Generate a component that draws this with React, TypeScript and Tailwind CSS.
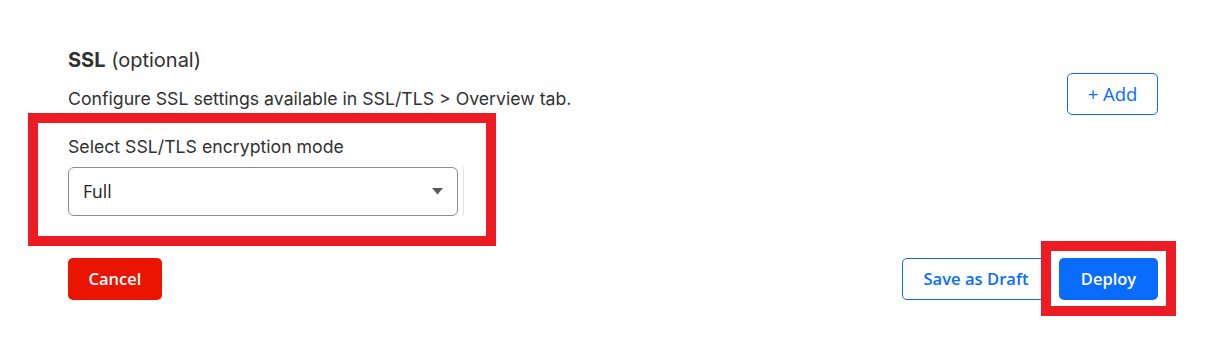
import React from 'react';

const App = () => {
    return (
        <div className="w-[1220px] h-[357px] bg-white text-[#313131] font-['Inter',sans-serif]">
            <div className="pl-[68px] pr-[62px] pt-[47px]">
                <div className="flex items-start justify-between">
                    <div>
                        <h2 className="text-[20px] leading-[26px]">
                            <span className="font-bold">SSL</span> (optional)
                        </h2>
                        <p className="mt-[13px] text-[17.7px] leading-[26px]">
                            Configure SSL settings available in SSL/TLS &gt; Overview tab.
                        </p>

                        {/* encryption mode select, highlighted */}
                        <div className="relative mt-[22px] w-[397px]">
                            <div className="pointer-events-none absolute left-[-40px] top-[-21px] z-10 h-[133px] w-[468px] border-[10px] border-[#ed1c24]" />
                            <label className="block text-[17.7px] leading-[26px]">Select SSL/TLS encryption mode</label>
                            <div className="mt-[7px] flex items-stretch">
                                <div className="flex h-[49px] w-[390px] items-center justify-between rounded-[6px] border border-[#8c8c8c] pl-[14px] pr-[14px]">
                                    <span className="font-['Open_Sans',sans-serif] text-[17.5px] text-[#222]">Full</span>
                                    <svg width="11" height="7" viewBox="0 0 11 7">
                                        <path d="M0 0 L11 0 L5.5 6.5 Z" fill="#595959" />
                                    </svg>
                                </div>
                                <div className="ml-[5px] w-px bg-[#d6e4f5]" />
                            </div>
                        </div>
                    </div>

                    <button className="mt-[26px] h-[42px] w-[91px] rounded-[5px] border border-[#0a6cff] font-['Open_Sans',sans-serif] text-[18.5px] text-[#0a6cff]">
                        + Add
                    </button>
                </div>

                <div className="mt-[42px] flex items-center justify-between">
                    <button className="h-[42px] w-[94px] rounded-[5px] bg-[#eb1400] font-['Open_Sans',sans-serif] text-[16.5px] font-semibold text-white">
                        Cancel
                    </button>
                    <div className="flex items-center gap-[9px]">
                        <button className="h-[42px] w-[148px] rounded-[5px] border border-[#0a6cff] bg-white font-['Open_Sans',sans-serif] text-[16.6px] font-semibold text-[#0a6cff]">
                            Save as Draft
                        </button>
                        <span className="relative">
                            <span className="pointer-events-none absolute left-[-18px] top-[-17px] z-10 h-[75px] w-[135px] border-[10px] border-[#ed1c24]" />
                            <button className="block h-[42px] w-[99px] rounded-[5px] bg-[#0a6cff] font-['Open_Sans',sans-serif] text-[16.5px] font-semibold text-white">
                                Deploy
                            </button>
                        </span>
                    </div>
                </div>
            </div>
        </div>
    );
};

export default App;
